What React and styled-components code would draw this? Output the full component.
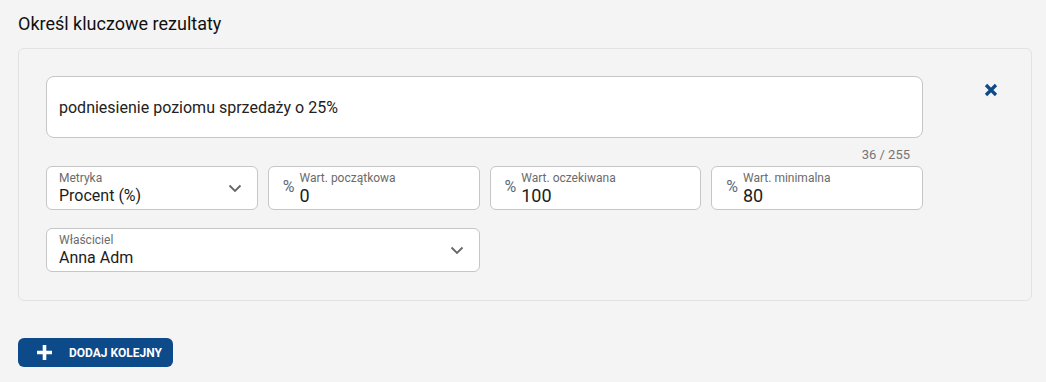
import styled, { createGlobalStyle } from "styled-components";

const BLUE = "#0d4a8a";

const GlobalStyle = createGlobalStyle`
  body {
    margin: 0;
    background: #f4f4f4;
    font-family: Roboto, "Liberation Sans", sans-serif;
    color: #1c1c1c;
  }
`;

const Page = styled.div`
  padding: 12px 14px 0 18px;
`;

const Title = styled.h2`
  margin: 0 0 12px;
  font-size: 18px;
  line-height: 24px;
  font-weight: 400;
  color: #111;
`;

const Card = styled.div`
  border: 1px solid #e2e2e2;
  border-radius: 6px;
  padding: 27px 0 28px 27px;
  display: grid;
  grid-template-columns: 877px 1fr;
`;

const Main = styled.div`
  display: flex;
  flex-direction: column;
`;

const TextBox = styled.div`
  height: 60px;
  background: #fff;
  border: 1px solid #c6c6c6;
  border-radius: 8px;
  display: flex;
  align-items: center;
  padding: 0 12px;
  font-size: 16px;
  color: #222;
`;

const Counter = styled.div`
  text-align: right;
  padding-right: 13px;
  font-size: 13px;
  line-height: 15px;
  margin: 9px 0 4px;
  color: #757575;
`;

const FieldRow = styled.div`
  display: grid;
  grid-template-columns: repeat(4, 1fr);
  gap: 10px;
  margin-bottom: 18px;
`;

const OwnerRow = styled.div`
  display: grid;
  grid-template-columns: repeat(2, 1fr);
  gap: 10px;
`;

const Field = styled.div`
  height: 42px;
  background: #fff;
  border: 1px solid #c6c6c6;
  border-radius: 6px;
  display: flex;
  align-items: center;
  padding: 0 14px 0 ${({ $prefix }) => ($prefix ? "14px" : "12px")};
`;

const Prefix = styled.span`
  font-size: 16px;
  color: #5c6b80;
  margin-right: 5px;
  margin-top: -3px;
`;

const FieldBody = styled.div`
  flex: 1;
  display: flex;
  flex-direction: column;
  padding-top: 1px;
`;

const Label = styled.span`
  font-size: 12px;
  line-height: 13px;
  color: #6b6b6b;
`;

const Value = styled.span`
  font-size: ${({ $large }) => ($large ? "18px" : "16px")};
  line-height: 21px;
  color: #1c1c1c;
`;

const Chevron = () => (
  <svg width="16" height="16" viewBox="0 0 16 16" fill="none">
    <path d="M2.5 5.5 8 11l5.5-5.5" stroke="#666" strokeWidth="1.8" />
  </svg>
);

const CloseCell = styled.div`
  display: flex;
  justify-content: flex-end;
  padding-top: 7px;
  padding-right: 33px;
`;

const AddButton = styled.button`
  margin-top: 37px;
  height: 29px;
  width: 155px;
  border: none;
  border-radius: 6px;
  background: ${BLUE};
  color: #fff;
  display: flex;
  align-items: center;
  gap: 16px;
  padding: 0 0 0 18px;
  font-family: Roboto, "Liberation Sans", sans-serif;
  font-weight: 700;
  font-size: 12px;
`;

const Select = ({ label, value }) => (
  <Field>
    <FieldBody>
      <Label>{label}</Label>
      <Value>{value}</Value>
    </FieldBody>
    <Chevron />
  </Field>
);

const PercentField = ({ label, value }) => (
  <Field $prefix>
    <Prefix>%</Prefix>
    <FieldBody>
      <Label>{label}</Label>
      <Value $large>{value}</Value>
    </FieldBody>
  </Field>
);

const App = () => (
  <>
    <GlobalStyle />
    <Page>
      <Title>Określ kluczowe rezultaty</Title>
      <Card>
        <Main>
          <TextBox>podniesienie poziomu sprzedaży o 25%</TextBox>
          <Counter>36 / 255</Counter>
          <FieldRow>
            <Select label="Metryka" value="Procent (%)" />
            <PercentField label="Wart. początkowa" value="0" />
            <PercentField label="Wart. oczekiwana" value="100" />
            <PercentField label="Wart. minimalna" value="80" />
          </FieldRow>
          <OwnerRow>
            <Select label="Właściciel" value="Anna Adm" />
          </OwnerRow>
        </Main>
        <CloseCell>
          <svg width="14" height="14" viewBox="0 0 14 14">
            <path d="M2 2l10 10M12 2 2 12" stroke={BLUE} strokeWidth="3.2" />
          </svg>
        </CloseCell>
      </Card>
      <AddButton>
        <svg width="17" height="17" viewBox="0 0 17 17">
          <path d="M8.5 1v15M1 8.5h15" stroke="#fff" strokeWidth="3.6" />
        </svg>
        DODAJ KOLEJNY
      </AddButton>
    </Page>
  </>
);

export default App;
